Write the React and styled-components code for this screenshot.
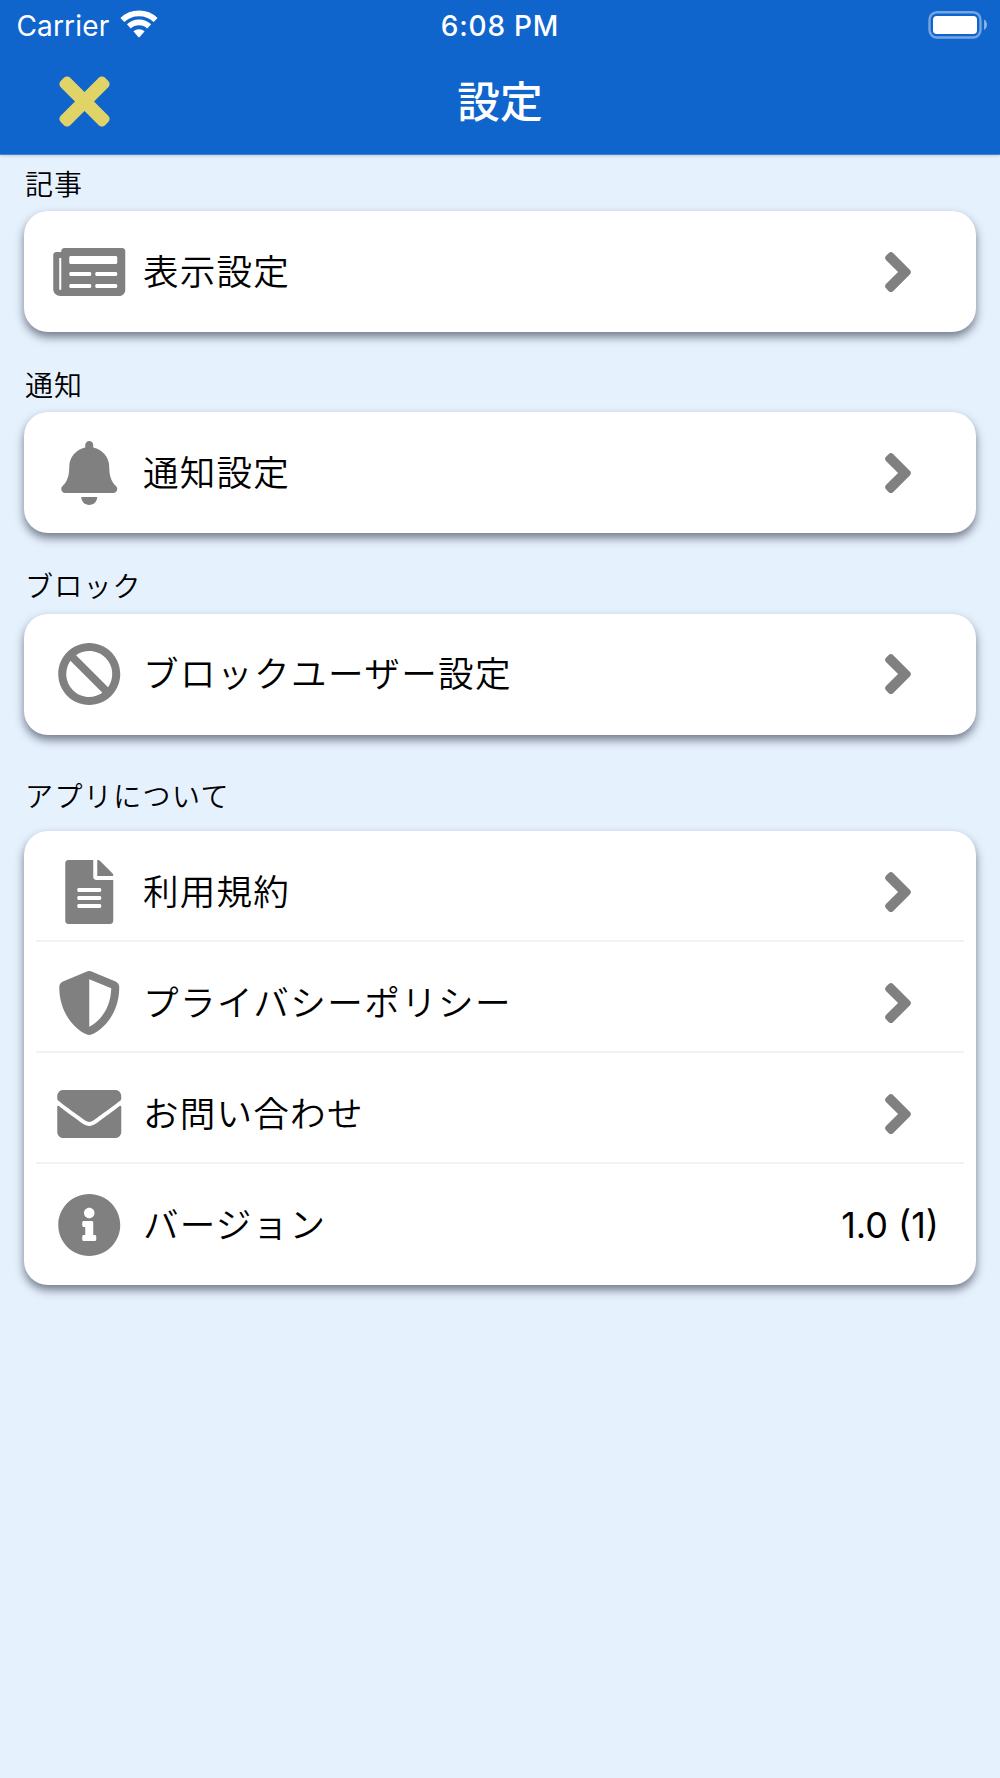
import React from "react";
import styled, { createGlobalStyle } from "styled-components";
import {
  FaAngleRight,
  FaBan,
  FaBell,
  FaEnvelope,
  FaFileAlt,
  FaInfoCircle,
  FaNewspaper,
  FaShieldAlt,
  FaTimes,
} from "react-icons/fa";

const GlobalStyle = createGlobalStyle`
  * { box-sizing: border-box; }
  body {
    margin: 0;
    background: #e6f1fe;
    font-family: "Noto Sans CJK JP", sans-serif;
    color: #000;
  }
`;

const Screen = styled.div`
  min-height: 1778px;
  display: flex;
  flex-direction: column;
  background: #e6f1fe;
`;

const Header = styled.header`
  height: 155px;
  background: #1065cd;
  color: #fff;
  border-bottom: 1px solid #3f83d6;
  box-shadow: 0 1px 3px rgba(0, 0, 0, 0.16);
`;

const StatusBar = styled.div`
  height: 50px;
  padding: 0 13px 0 16px;
  display: grid;
  grid-template-columns: 1fr auto 1fr;
  align-items: center;
  font-family: Inter, sans-serif;
  font-size: 28px;
  line-height: 48px;
`;

const CarrierGroup = styled.div`
  display: flex;
  align-items: center;
  gap: 11px;

  svg {
    margin-top: -2px;
  }
`;

const Carrier = styled.span`
  width: 92.5px;
  padding: 2px 0 0 0.5px;
  letter-spacing: 0.15px;
`;

const Clock = styled.span`
  padding: 2px 3px 0 0;
  font-weight: 500;
  letter-spacing: 0.8px;
`;

const BatteryGroup = styled.div`
  display: flex;
  justify-content: flex-end;

  svg {
    margin-top: -1px;
  }
`;

const NavBar = styled.div`
  height: 104px;
  padding: 0 49px 1px;
  display: grid;
  grid-template-columns: 72px 1fr 72px;
  align-items: center;
`;

const CloseButton = styled.button`
  padding: 0;
  border: 0;
  background: none;
  color: #e0d368;
  display: flex;

  svg {
    width: 71px;
    height: 73px;
  }
`;

const Title = styled.h1`
  margin: 0;
  padding-bottom: 6px;
  text-align: center;
  font-size: 42.7px;
  font-weight: 500;
  line-height: 60px;
`;

const Section = styled.section`
  display: flex;
  flex-direction: column;
  padding: 0 24px;
`;

const SectionLabel = styled.h2`
  margin: 0;
  height: ${(p) => p.$height}px;
  padding: ${(p) => p.$top}px 0 0 1px;
  font-size: 28px;
  letter-spacing: ${(p) => p.$spacing}px;
  font-weight: 350;
  line-height: 40px;
`;

const Card = styled.div`
  background: #fff;
  border-radius: 24px;
  padding: 0 12px 12px;
  box-shadow: 0 5px 10px rgba(8, 14, 32, 0.52);
`;

const Row = styled.div`
  padding: 12px 50px 0 13px;
  display: flex;
  align-items: center;
  height: 109px;

  & + & {
    border-top: 2px solid #f1f1f8;
    height: 111px;
  }
`;

const RowIcon = styled.span`
  display: flex;
  color: #808080;

  svg {
    width: 80.5px;
    height: 64px;
  }
`;

const RowLabel = styled.span`
  flex: 1;
  padding: 0 0 4px 13.5px;
  font-size: 35.6px;
  letter-spacing: ${(p) => (p.$long ? 1.4 : 1.2)}px;
  font-weight: 350;
  line-height: 54px;
`;

const Chevron = styled(FaAngleRight)`
  width: 32px;
  height: 64px;
  color: #808080;
`;

const Value = styled.span`
  margin-right: -25px;
  padding-top: 1px;
  font-family: Inter, sans-serif;
  font-size: 36px;
`;

function WifiIcon() {
  return (
    <svg width="38" height="30" viewBox="0 0 38 30" fill="none" stroke="#fff" strokeWidth="5.7">
      <path d="M2.4 11A24.15 24.15 0 0 1 35.6 11" />
      <path d="M8.8 17.4A15.15 15.15 0 0 1 29.2 17.4" />
      <path d="M13.4 22.3A8.3 8.3 0 0 1 24.6 22.3L19.7 28Q19 28.6 18.3 28Z" fill="#fff" stroke="none" />
    </svg>
  );
}

function BatteryIcon() {
  return (
    <svg width="59" height="28" viewBox="0 0 59 28">
      <rect x="1.5" y="1.2" width="51" height="25.3" rx="7.5" fill="none" stroke="#fff" strokeOpacity="0.42" strokeWidth="2.4" />
      <rect x="5" y="5" width="44" height="18" rx="3.8" fill="#fff" />
      <path d="M56 8.6C60 11 60 16.600 56 19Z" fill="#fff" fillOpacity="0.5" />
    </svg>
  );
}

const sections = [
  { label: "記事", height: 56, top: 8, spacing: 0.9, rows: [{ icon: FaNewspaper, text: "表示設定" }] },
  { label: "通知", height: 80, top: 32, spacing: 0.9, rows: [{ icon: FaBell, text: "通知設定" }] },
  { label: "ブロック", height: 80.5, top: 32, spacing: 1.2, rows: [{ icon: FaBan, text: "ブロックユーザー設定" }] },
  {
    label: "アプリについて",
    height: 96.5,
    top: 40,
    spacing: 1.4,
    rows: [
      { icon: FaFileAlt, text: "利用規約" },
      { icon: FaShieldAlt, text: "プライバシーポリシー" },
      { icon: FaEnvelope, text: "お問い合わせ" },
      { icon: FaInfoCircle, text: "バージョン", value: "1.0 (1)" },
    ],
  },
];

export default function App() {
  return (
    <Screen>
      <GlobalStyle />
      <Header>
        <StatusBar>
          <CarrierGroup>
            <Carrier>Carrier</Carrier>
            <WifiIcon />
          </CarrierGroup>
          <Clock>6:08 PM</Clock>
          <BatteryGroup>
            <BatteryIcon />
          </BatteryGroup>
        </StatusBar>
        <NavBar>
          <CloseButton aria-label="閉じる">
            <FaTimes />
          </CloseButton>
          <Title>設定</Title>
        </NavBar>
      </Header>
      {sections.map((section) => (
        <Section key={section.label}>
          <SectionLabel $height={section.height} $top={section.top} $spacing={section.spacing}>
            {section.label}
          </SectionLabel>
          <Card>
            {section.rows.map(({ icon: Icon, text, value }) => (
              <Row key={text}>
                <RowIcon>
                  <Icon />
                </RowIcon>
                <RowLabel $long={text.length > 8}>{text}</RowLabel>
                {value ? <Value>{value}</Value> : <Chevron />}
              </Row>
            ))}
          </Card>
        </Section>
      ))}
    </Screen>
  );
}
